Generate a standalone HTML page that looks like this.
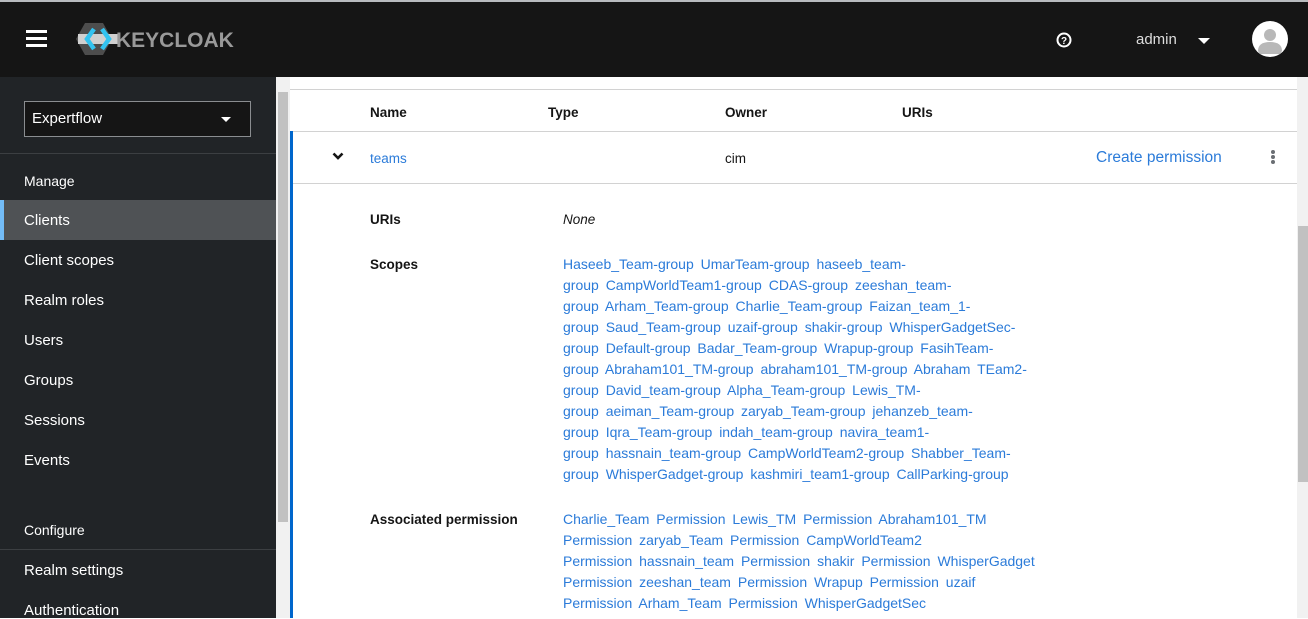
<!DOCTYPE html>
<html><head><meta charset="utf-8"><style>
*{margin:0;padding:0;box-sizing:border-box}
body{width:1308px;height:618px;overflow:hidden;font-family:"Liberation Sans",sans-serif;background:#fff;position:relative}
.hdr{position:absolute;left:0;top:0;width:1308px;height:77px;background:#151515;border-top:2px solid #b8bbbe}
.side{position:absolute;left:0;top:77px;width:276px;height:541px;background:#212427;color:#fff}
.abs{position:absolute}
.nav{position:absolute;left:24px;font-size:15px;color:#fff}
.sb{position:absolute;background:#f1f1f1}
.th{background:#c1c1c1;position:absolute}
.lnk{color:#2b7bd9}
.t{position:absolute;font-size:14px;white-space:nowrap;line-height:21px;color:#2b7bd9;word-spacing:3px}
.lbl{position:absolute;left:370px;font-size:13.5px;font-weight:bold;color:#151515}
</style></head><body>
<div class="hdr">
 <div class="abs" style="left:26px;top:28px;width:21px;height:3px;background:#fff;box-shadow:0 7px 0 #fff,0 14px 0 #fff"></div>
 <svg class="abs" style="left:76px;top:20px" width="160" height="34" viewBox="0 0 160 34">
  <polygon points="9,1 27,1 36,17 27,33 9,33 0,17" fill="#4d4d4d"/>
  <polygon points="2,12 44,12 44,22 2,22" fill="#d0d0d0"/>
  <path d="M18,7 L11,17 L18,27 M26,7 L33,17 L26,27" stroke="#33c3f0" stroke-width="4.5" fill="none"/>
  <text x="40" y="25" font-family="Liberation Sans" font-weight="bold" font-size="21" fill="#999">KEYCLOAK</text>
 </svg>
 <svg class="abs" style="left:1056px;top:30px" width="16" height="16" viewBox="0 0 16 16"><circle cx="8" cy="8" r="6.5" stroke="#fff" stroke-width="2" fill="none"/><text x="8" y="12" text-anchor="middle" font-size="10" font-weight="bold" fill="#fff" font-family="Liberation Sans">?</text></svg>
 <div class="abs" style="left:1136px;top:29px;color:#ddd;font-size:15px">admin</div>
 <div class="abs" style="left:1198px;top:36px;border-left:6px solid transparent;border-right:6px solid transparent;border-top:6px solid #fff"></div>
 <svg class="abs" style="left:1252px;top:19px" width="36" height="36" viewBox="0 0 36 36"><circle cx="18" cy="18" r="18" fill="#fff"/><circle cx="18" cy="14" r="6" fill="#b8b8b8"/><path d="M6,30 Q6,21 18,21 Q30,21 30,30 L28,33 L8,33Z" fill="#b8b8b8"/></svg>
</div>
<div class="side">
 <div class="abs" style="left:24px;top:24px;width:227px;height:36px;border:1px solid #8a8d90;background:#151515"></div>
 <div class="nav" style="top:33px;left:32px">Expertflow</div>
 <div class="abs" style="left:221px;top:40px;border-left:5px solid transparent;border-right:5px solid transparent;border-top:5px solid #fff"></div>
 <div class="abs" style="left:0;top:76px;width:276px;height:1px;background:#3c3f42"></div>
 <div class="nav" style="top:96px;font-size:14px">Manage</div>
 <div class="abs" style="left:0;top:123px;width:276px;height:40px;background:#4f5255;border-left:4px solid #73bcf7"></div>
 <div class="nav" style="top:135px">Clients</div>
 <div class="nav" style="top:175px">Client scopes</div>
 <div class="nav" style="top:215px">Realm roles</div>
 <div class="nav" style="top:255px">Users</div>
 <div class="nav" style="top:295px">Groups</div>
 <div class="nav" style="top:335px">Sessions</div>
 <div class="nav" style="top:375px">Events</div>
 <div class="nav" style="top:445px;font-size:14px">Configure</div>
 <div class="abs" style="left:0;top:472px;width:276px;height:1px;background:#3c3f42"></div>
 <div class="nav" style="top:485px">Realm settings</div>
 <div class="nav" style="top:525px">Authentication</div>
</div>
<div class="sb" style="left:276px;top:77px;width:14px;height:541px"><div class="th" style="left:2px;top:15px;width:10px;height:430px"></div></div>
<div class="sb" style="left:1297px;top:77px;width:11px;height:541px"><div class="th" style="left:1px;top:149px;width:10px;height:256px"></div></div>
<div class="abs" style="left:290px;top:89px;width:1007px;height:1px;background:#d2d2d2"></div>
<div class="abs" style="left:290px;top:131px;width:1007px;height:1px;background:#d2d2d2"></div>
<div class="abs" style="left:293px;top:183px;width:1004px;height:1px;background:#d2d2d2"></div>
<div class="abs" style="left:290px;top:131px;width:3px;height:487px;background:#06c"></div>
<div class="abs" style="font-size:13.5px;font-weight:bold;color:#151515;top:105px;left:370px">Name</div>
<div class="abs" style="font-size:13.5px;font-weight:bold;color:#151515;top:105px;left:548px">Type</div>
<div class="abs" style="font-size:13.5px;font-weight:bold;color:#151515;top:105px;left:725px">Owner</div>
<div class="abs" style="font-size:13.5px;font-weight:bold;color:#151515;top:105px;left:902px">URIs</div>
<svg class="abs" style="left:332px;top:152px" width="12" height="9" viewBox="0 0 12 9"><path d="M1.5,1.5 L6,6 L10.5,1.5" stroke="#151515" stroke-width="2.6" fill="none"/></svg>
<div class="abs lnk" style="left:370px;top:151px;font-size:13.5px">teams</div>
<div class="abs" style="left:725px;top:151px;font-size:13.5px;color:#151515">cim</div>
<div class="abs lnk" style="left:1096px;top:149px;font-size:15.5px">Create permission</div>
<div class="abs" style="left:1271px;top:150px;width:4px;height:4px;border-radius:2px;background:#6a6e73;box-shadow:0 5px 0 #6a6e73,0 10px 0 #6a6e73"></div>
<div class="lbl" style="top:212px">URIs</div>
<div class="abs" style="left:563px;top:212px;font-size:13.5px;font-style:italic;color:#151515">None</div>
<div class="lbl" style="top:257px">Scopes</div>
<div class="t" style="left:563px;top:254px">Haseeb_Team-group UmarTeam-group haseeb_team-<br>group CampWorldTeam1-group CDAS-group zeeshan_team-<br>group Arham_Team-group Charlie_Team-group Faizan_team_1-<br>group Saud_Team-group uzaif-group shakir-group WhisperGadgetSec-<br>group Default-group Badar_Team-group Wrapup-group FasihTeam-<br>group Abraham101_TM-group abraham101_TM-group Abraham TEam2-<br>group David_team-group Alpha_Team-group Lewis_TM-<br>group aeiman_Team-group zaryab_Team-group jehanzeb_team-<br>group Iqra_Team-group indah_team-group navira_team1-<br>group hassnain_team-group CampWorldTeam2-group Shabber_Team-<br>group WhisperGadget-group kashmiri_team1-group CallParking-group</div>
<div class="lbl" style="top:512px">Associated permission</div>
<div class="t" style="left:563px;top:509px">Charlie_Team Permission Lewis_TM Permission Abraham101_TM<br>Permission zaryab_Team Permission CampWorldTeam2<br>Permission hassnain_team Permission shakir Permission WhisperGadget<br>Permission zeeshan_team Permission Wrapup Permission uzaif<br>Permission Arham_Team Permission WhisperGadgetSec</div>
</body></html>
